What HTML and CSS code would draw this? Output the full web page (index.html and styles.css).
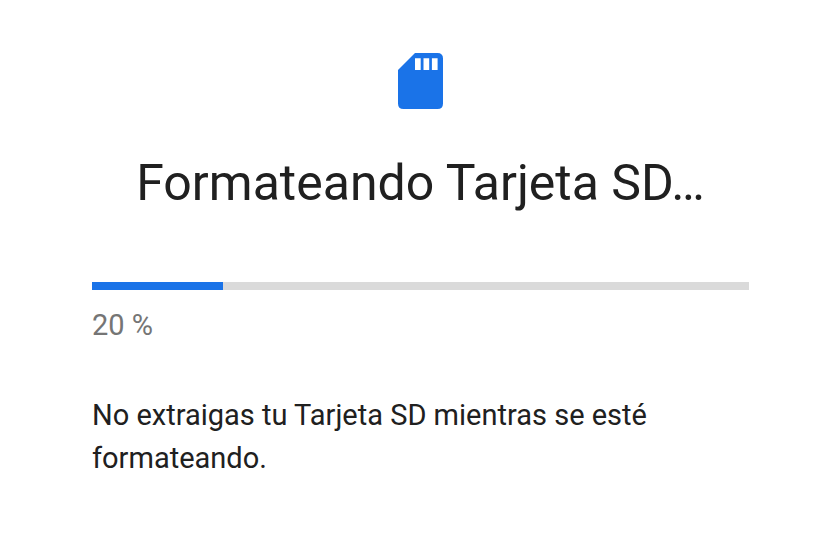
FILE: index.html
```html
<!DOCTYPE html>
<html lang="es">
<head>
<meta charset="utf-8">
<meta name="viewport" content="width=device-width, initial-scale=1">
<title>Formateando Tarjeta SD</title>
<link rel="stylesheet" href="styles.css">
</head>
<body>
<main class="setup">
  <header class="header">
    <svg class="icon" viewBox="0 0 45 56" aria-hidden="true">
      <path fill="#1a73e8" fill-rule="evenodd" d="M17 0H39.500Q45 0 45 5.500V50.500Q45 56 39.500 56H5.500Q0 56 0 50.500V17ZM17 5.300V17H22.700V5.300ZM25.500 5.300V17H31.200V5.300ZM33.900 5.300V17H39.600V5.300Z"/>
    </svg>
    <h1 class="title">Formateando Tarjeta SD…</h1>
  </header>
  <progress class="bar" id="progress" max="100" value="20"></progress>
  <label class="percent" for="progress">20 %</label>
  <p class="message">No extraigas tu Tarjeta SD mientras se esté formateando.</p>
</main>
</body>
</html>
```

FILE: styles.css
```css
body {
  margin: 0;
  background: #fff;
  color: #202020;
  font-family: Roboto, sans-serif;
}

.setup {
  display: flex;
  flex-direction: column;
  padding: 53px 91px 80px 92px;
}

.header {
  display: flex;
  flex-direction: column;
  align-items: center;
}

.icon {
  width: 45px;
  height: 56px;
}

.title {
  margin: 42px 0 67px;
  font-size: 50px;
  font-weight: 400;
  line-height: 64px;
  text-align: center;
}

.bar {
  display: block;
  width: 100%;
  height: 8px;
  border: 0;
  background: #dadada;
  appearance: none;
}

.bar::-webkit-progress-bar {
  background: #dadada;
}

.bar::-webkit-progress-value {
  background: #1a73e8;
}

.percent {
  margin-top: 14px;
  color: #757575;
  font-size: 29px;
  line-height: 43px;
}

.message {
  margin: 47px 0 0;
  font-size: 29px;
  line-height: 43px;
}
```
